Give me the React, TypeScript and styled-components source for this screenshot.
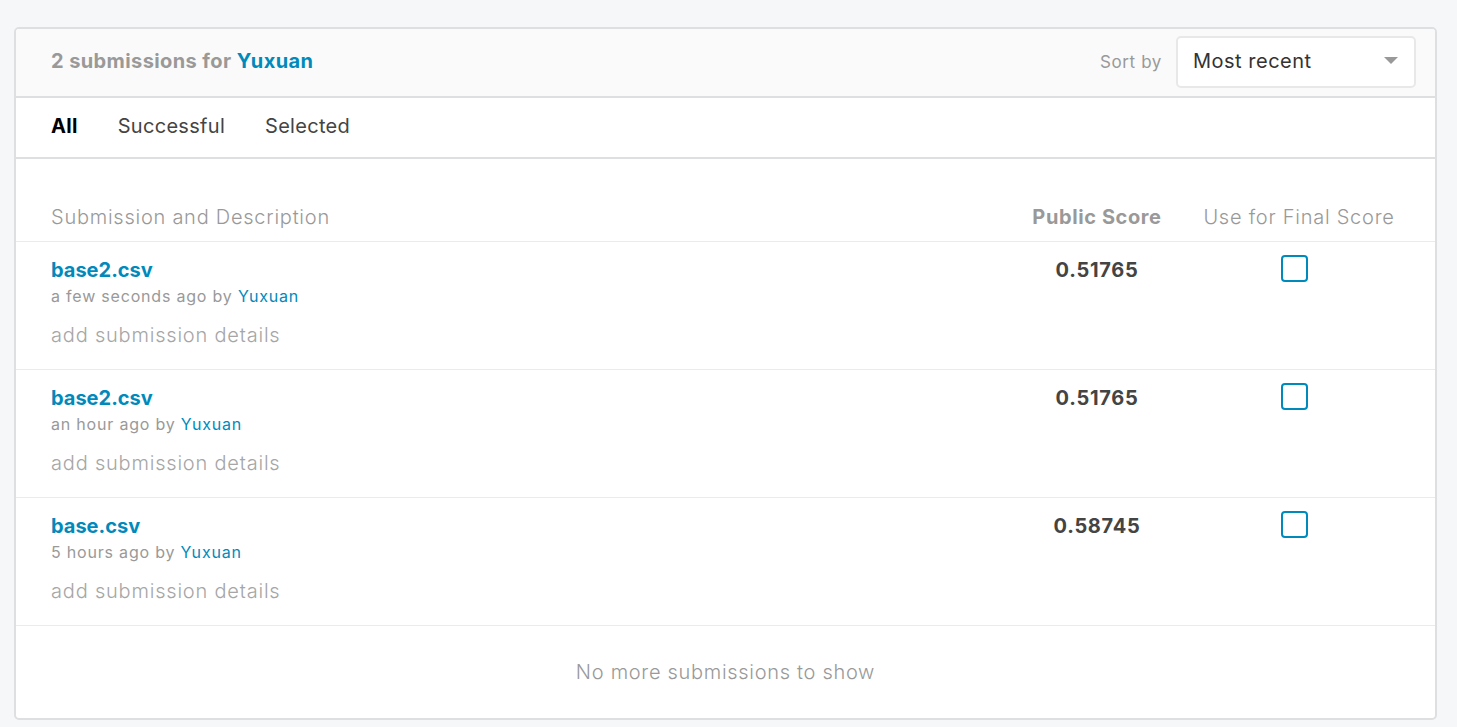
import React from "react";
import styled, { createGlobalStyle } from "styled-components";

const colors = {
  page: "#f5f7f8",
  border: "#dedfe0",
  header: "#fafafa",
  blue: "#008abc",
  muted: "#999999",
  light: "#a6a6a6",
  text: "#333333",
};

const font = `Inter, "Liberation Sans", sans-serif`;

const GlobalStyle = createGlobalStyle`
  body {
    margin: 0;
    background: ${colors.page};
    font-family: ${font};
  }
`;

interface ISubmission {
  file: string;
  when: string;
  score: string;
}

const submissions: ISubmission[] = [
  { file: "base2.csv", when: "a few seconds ago", score: "0.51765" },
  { file: "base2.csv", when: "an hour ago", score: "0.51765" },
  { file: "base.csv", when: "5 hours ago", score: "0.58745" },
];

const tabs = ["All", "Successful", "Selected"];

export default function App() {
  return (
    <>
      <GlobalStyle />
      <Page>
        <Card>
          <Header>
            <Title>
              2 submissions for <Link>Yuxuan</Link>
            </Title>
            <SortWrap>
              <SortLabel>Sort by</SortLabel>
              <Select>
                <span>Most recent</span>
                <Caret />
              </Select>
            </SortWrap>
          </Header>
          <Tabs>
            {tabs.map((tab, i) => (
              <Tab key={tab} $active={i === 0}>
                {tab}
              </Tab>
            ))}
          </Tabs>
          <Table>
            <HeadRow>
              <HeadCell>Submission and Description</HeadCell>
              <HeadCell $bold $center>
                Public Score
              </HeadCell>
              <HeadCell $center>Use for Final Score</HeadCell>
            </HeadRow>
            {submissions.map((s, i) => (
              <Row key={i}>
                <Info>
                  <FileName>{s.file}</FileName>
                  <Meta>
                    {s.when} by <Link>Yuxuan</Link>
                  </Meta>
                  <Details>add submission details</Details>
                </Info>
                <Score>{s.score}</Score>
                <CheckCell>
                  <Check />
                </CheckCell>
              </Row>
            ))}
          </Table>
          <Footer>No more submissions to show</Footer>
        </Card>
      </Page>
    </>
  );
}

const Page = styled.div`
  padding: 27px 20px 9px 14px;
`;

const Card = styled.div`
  border: 2px solid ${colors.border};
  border-radius: 5px;
  background: #fff;
  overflow: hidden;
`;

const Header = styled.div`
  display: flex;
  align-items: center;
  justify-content: space-between;
  height: 67px;
  padding: 0 19px 0 35px;
  background: ${colors.header};
  border-bottom: 2px solid ${colors.border};
`;

const Title = styled.div`
  margin-top: -3px;
  font-size: 20px;
  font-weight: 700;
  letter-spacing: 0.4px;
  color: ${colors.muted};
`;

const Link = styled.span`
  color: ${colors.blue};
`;

const SortWrap = styled.div`
  display: flex;
  align-items: center;
  gap: 14px;
  margin-top: -2px;
`;

const SortLabel = styled.span`
  font-size: 17px;
  letter-spacing: 0.6px;
  color: ${colors.muted};
`;

const Select = styled.div`
  display: flex;
  align-items: center;
  justify-content: space-between;
  box-sizing: border-box;
  width: 240px;
  height: 52px;
  padding: 0 16px 2px 15px;
  background: #fff;
  border: 2px solid #e8e8e8;
  border-radius: 5px;
  font-size: 20px;
  letter-spacing: 0.5px;
  color: ${colors.text};
`;

const Caret = styled.span`
  width: 0;
  height: 0;
  border-left: 7px solid transparent;
  border-right: 7px solid transparent;
  border-top: 7px solid #999;
`;

const Tabs = styled.div`
  display: flex;
  align-items: center;
  gap: 40px;
  height: 55px;
  padding: 0 35px 4px;
  border-bottom: 2px solid ${colors.border};
`;

const Tab = styled.span<{ $active?: boolean }>`
  font-size: 20px;
  font-weight: ${(p) => (p.$active ? 700 : 400)};
  letter-spacing: 0.3px;
  color: ${(p) => (p.$active ? "#000" : "#444")};
`;

const Table = styled.div`
  padding-top: 32px;
`;

const grid = `
  display: grid;
  grid-template-columns: 1fr 160px 244px;
  padding: 0 14px 0 35px;
`;

const HeadRow = styled.div`
  ${grid};
  align-items: center;
  height: 48px;
  padding-top: 2px;
  border-bottom: 1px solid #ebebeb;
`;

const HeadCell = styled.div<{ $bold?: boolean; $center?: boolean }>`
  font-size: 20px;
  font-weight: ${(p) => (p.$bold ? 700 : 300)};
  letter-spacing: ${(p) => (p.$bold ? 0.6 : 0.75)}px;
  color: ${colors.muted};
  text-align: ${(p) => (p.$center ? "center" : "left")};
`;

const Row = styled.div`
  ${grid};
  height: 128px;
  box-sizing: border-box;
  padding-top: 15px;
  border-bottom: 1px solid #ebebeb;
`;

const Info = styled.div`
  display: flex;
  flex-direction: column;
`;

const FileName = styled.div`
  font-size: 20px;
  font-weight: 700;
  color: ${colors.blue};
  line-height: 26px;
`;

const Meta = styled.div`
  margin-top: 2px;
  font-size: 16px;
  letter-spacing: 0.8px;
  color: ${colors.muted};
  line-height: 22px;
`;

const Details = styled.div`
  margin-top: 15px;
  font-size: 20px;
  font-weight: 300;
  letter-spacing: 0.8px;
  color: ${colors.light};
  line-height: 26px;
`;

const Score = styled.div`
  font-size: 20px;
  font-weight: 700;
  letter-spacing: 0.7px;
  color: #444;
  text-align: center;
  line-height: 26px;
`;

const CheckCell = styled.div`
  display: flex;
  justify-content: center;
  padding-right: 10px;
`;

const Check = styled.span`
  width: 23px;
  height: 23px;
  margin-top: -2px;
  border: 2px solid ${colors.blue};
  border-radius: 4px;
`;

const Footer = styled.div`
  height: 92px;
  display: flex;
  align-items: center;
  justify-content: center;
  font-size: 20px;
  font-weight: 300;
  letter-spacing: 0.7px;
  color: ${colors.muted};
`;
